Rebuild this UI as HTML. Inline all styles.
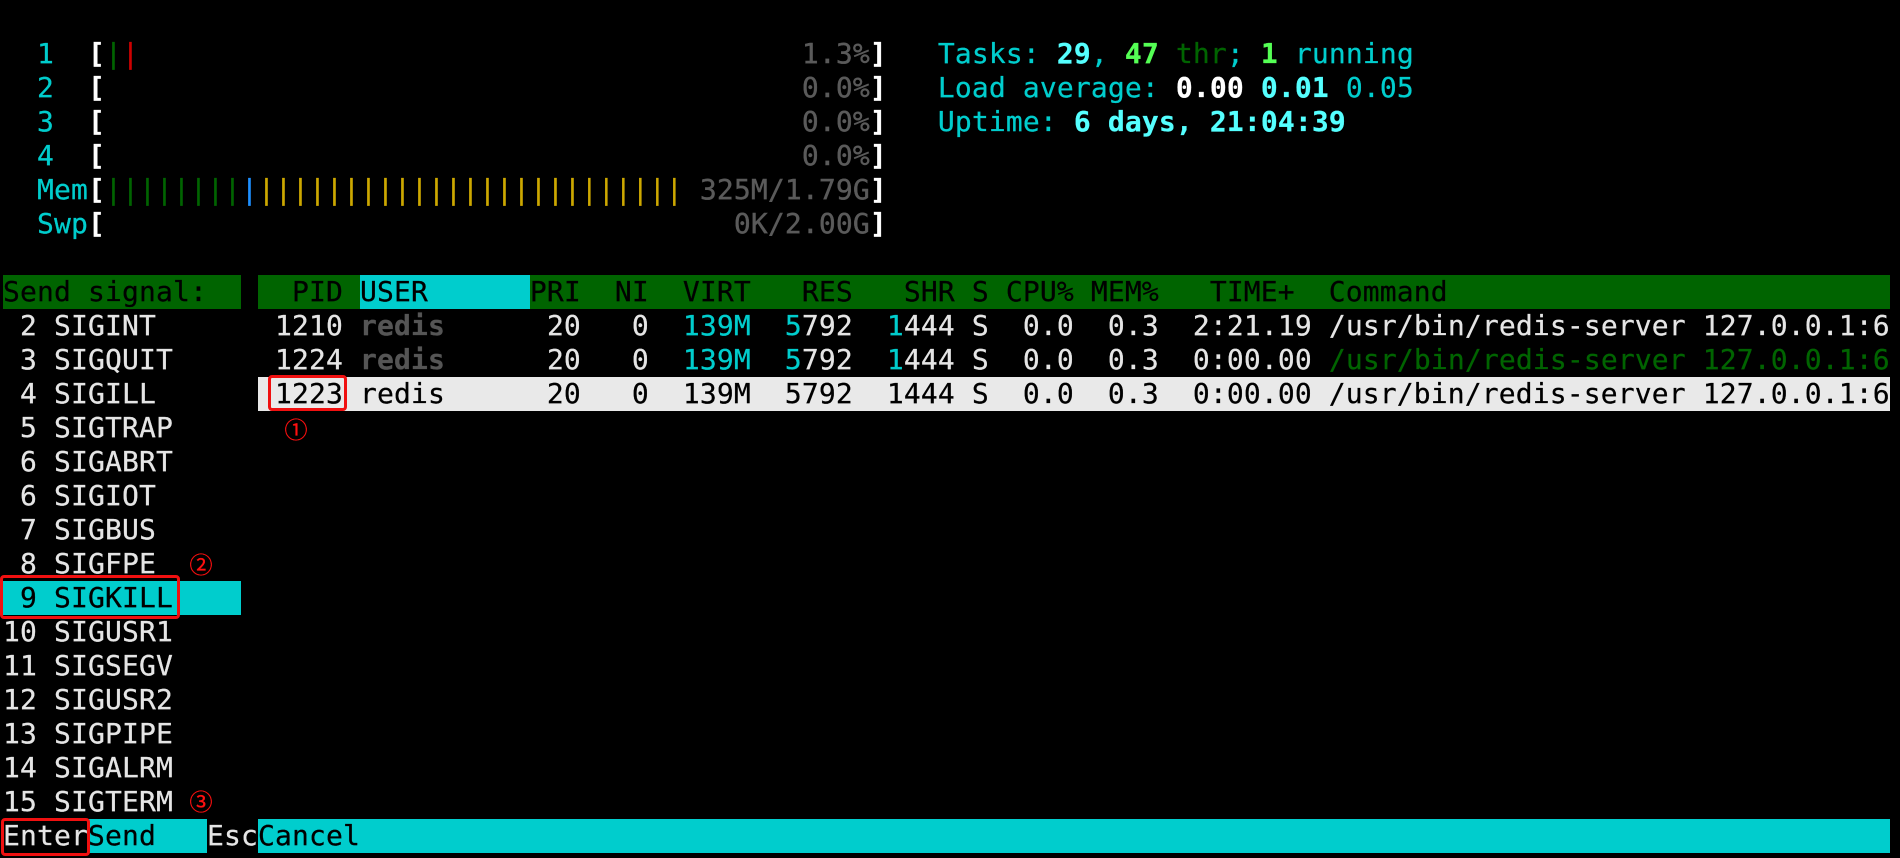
<!DOCTYPE html>
<html><head><meta charset="utf-8"><style>
html,body{margin:0;padding:0;background:#000;width:1900px;height:858px;overflow:hidden}
.l{position:absolute;left:3px;height:34px;line-height:34px;white-space:pre;font-family:"DejaVu Sans Mono","Liberation Mono",monospace;font-size:28px;letter-spacing:.14px;color:#e5e5e5;-webkit-text-stroke:.25px currentColor}
.bar{position:absolute;height:34px}
.c{color:#00cdcd}.w{color:#fff;font-weight:bold}.g{color:#5a5a5a;-webkit-text-stroke:.4px currentColor}.gb{color:#555;font-weight:bold}
.cb{color:#55ffff;font-weight:bold}.gr{color:#55ff55;font-weight:bold}.dg{color:#006400}
.r{color:#cd0000}.y{color:#cda800}.b{color:#1e90ff}.k{color:#000}
.box{position:absolute;border:3px solid #f01010;border-radius:4px;box-sizing:border-box}
.n{position:absolute;color:#ff1010;font-family:"Noto Sans CJK SC",sans-serif;font-size:23px;line-height:24px;width:24px;text-align:center;-webkit-text-stroke:.3px currentColor}
</style></head><body>
<div class="bar" style="left:3px;top:275px;width:238px;background:#006400"></div>
<div class="bar" style="left:258px;top:275px;width:1632px;background:#006400"></div>
<div class="bar" style="left:360px;top:275px;width:170px;background:#00cdcd"></div>
<div class="bar" style="left:258px;top:377px;width:1632px;background:#e9e9e9"></div>
<div class="bar" style="left:3px;top:581px;width:238px;background:#00cdcd"></div>
<div class="bar" style="left:88px;top:819px;width:119px;background:#00cdcd"></div>
<div class="bar" style="left:258px;top:819px;width:1632px;background:#00cdcd"></div>

<div class="l" style="top:37px">  <span class="c">1</span>  <span class="w">[</span><span class="dg">|</span><span class="r">|</span>                                       <span class="g">1.3%</span><span class="w">]</span>   <span class="c">Tasks: </span><span class="cb">29</span><span class="c">, </span><span class="gr">47</span> <span class="dg">thr</span><span class="c">; </span><span class="gr">1</span><span class="c"> running</span></div>
<div class="l" style="top:71px">  <span class="c">2</span>  <span class="w">[</span>                                         <span class="g">0.0%</span><span class="w">]</span>   <span class="c">Load average: </span><span class="w">0.00</span> <span class="cb">0.01</span> <span class="c">0.05</span></div>
<div class="l" style="top:105px">  <span class="c">3</span>  <span class="w">[</span>                                         <span class="g">0.0%</span><span class="w">]</span>   <span class="c">Uptime: </span><span class="cb">6 days, 21:04:39</span></div>
<div class="l" style="top:139px">  <span class="c">4</span>  <span class="w">[</span>                                         <span class="g">0.0%</span><span class="w">]</span></div>
<div class="l" style="top:173px">  <span class="c">Mem</span><span class="w">[</span><span class="dg">||||||||</span><span class="b">|</span><span class="y">|||||||||||||||||||||||||</span> <span class="g">325M/1.79G</span><span class="w">]</span></div>
<div class="l" style="top:207px">  <span class="c">Swp</span><span class="w">[</span>                                     <span class="g">0K/2.00G</span><span class="w">]</span></div>

<div class="l k" style="top:275px">Send signal:     PID USER      PRI  NI  VIRT   RES   SHR S CPU% MEM%   TIME+  Command</div>
<div class="l" style="top:309px"> 2 SIGINT       1210 <span class="gb">redis</span>      20   0  <span class="c">139M</span>  <span class="c">5</span>792  <span class="c">1</span>444 S  0.0  0.3  2:21.19 /usr/bin/redis-server 127.0.0.1:6</div>
<div class="l" style="top:343px"> 3 SIGQUIT      1224 <span class="gb">redis</span>      20   0  <span class="c">139M</span>  <span class="c">5</span>792  <span class="c">1</span>444 S  0.0  0.3  0:00.00 <span class="dg">/usr/bin/redis-server 127.0.0.1:6</span></div>
<div class="l" style="top:377px"> 4 SIGILL       <span class="k">1223 redis      20   0  139M  5792  1444 S  0.0  0.3  0:00.00 /usr/bin/redis-server 127.0.0.1:6</span></div>
<div class="l" style="top:411px"> 5 SIGTRAP</div>
<div class="l" style="top:445px"> 6 SIGABRT</div>
<div class="l" style="top:479px"> 6 SIGIOT</div>
<div class="l" style="top:513px"> 7 SIGBUS</div>
<div class="l" style="top:547px"> 8 SIGFPE</div>
<div class="l k" style="top:581px"> 9 SIGKILL</div>
<div class="l" style="top:615px">10 SIGUSR1</div>
<div class="l" style="top:649px">11 SIGSEGV</div>
<div class="l" style="top:683px">12 SIGUSR2</div>
<div class="l" style="top:717px">13 SIGPIPE</div>
<div class="l" style="top:751px">14 SIGALRM</div>
<div class="l" style="top:785px">15 SIGTERM</div>
<div class="l" style="top:819px">Enter<span class="k">Send   </span>Esc<span class="k">Cancel</span></div>

<div class="box" style="left:268px;top:375px;width:79px;height:36px"></div>
<div class="box" style="left:0;top:575px;width:180px;height:44px"></div>
<div class="box" style="left:1px;top:818px;width:89px;height:38px"></div>
<div class="n" style="left:284px;top:416px">①</div>
<div class="n" style="left:189px;top:551px">②</div>
<div class="n" style="left:189px;top:788px">③</div>
</body></html>
